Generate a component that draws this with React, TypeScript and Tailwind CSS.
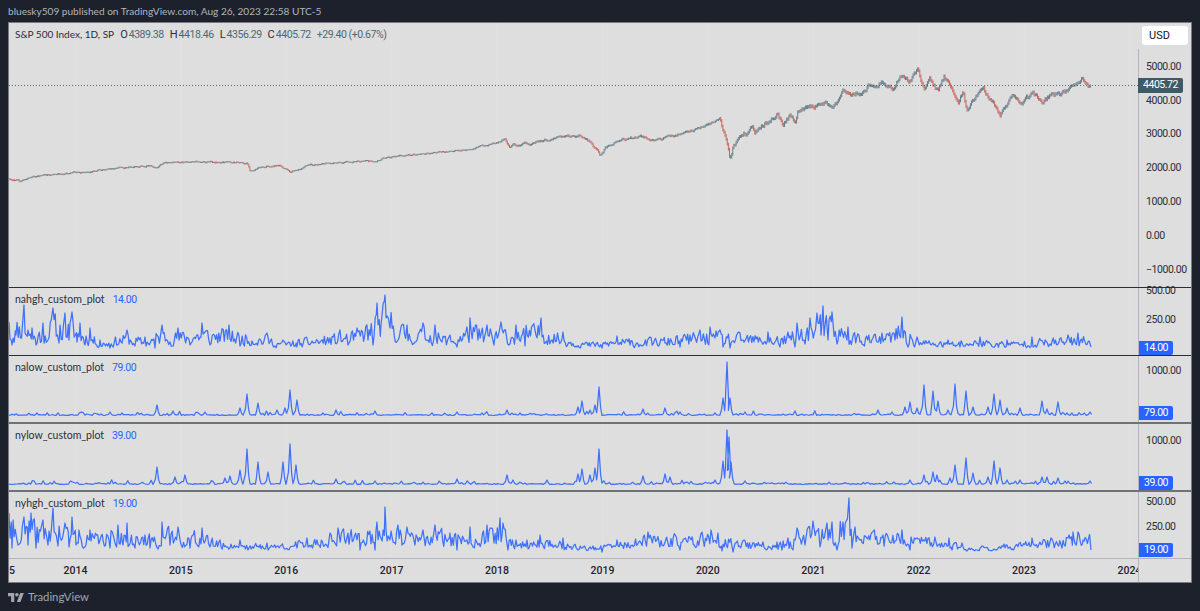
import React from "react";

type P = [number, number];

function rng(seed: number) {
  let s = seed;
  return () => {
    s = (s * 1664525 + 1013904223) >>> 0;
    return s / 4294967296;
  };
}

function lerp(k: P[], x: number) {
  if (x <= k[0][0]) return k[0][1];
  for (let i = 1; i < k.length; i++) {
    if (x <= k[i][0]) {
      const [a, b] = k[i - 1];
      const [c, d] = k[i];
      return b + ((d - b) * (x - a)) / (c - a || 1);
    }
  }
  return k[k.length - 1][1];
}

function dense(keys: P[], base: number, seed: number) {
  const r = rng(seed);
  const peaks = keys.filter((k, i) => {
    const a = keys[i - 1];
    const b = keys[i + 1];
    return (!a || k[1] <= a[1]) && (!b || k[1] <= b[1]);
  });
  const out: P[] = [];
  let n = 0.5;
  for (let i = 0; i < keys.length; i++) {
    out.push(keys[i]);
    if (i === keys.length - 1) break;
    const x0 = keys[i][0];
    const x1 = keys[i + 1][0];
    for (let x = x0 + 1.1; x < x1 - 0.6; x += 1.1) {
      const e = Math.max(base - lerp(peaks, x), 6);
      n = 0.3 * n + 0.7 * r();
      const f = 0.14 + 0.84 * Math.pow(n, 1.2);
      out.push([x, base - e * f]);
    }
  }
  return out;
}

function sparse(keys: P[], base: number, seed: number) {
  const r = rng(seed);
  const ripple = () => base - r() * 1 - Math.pow(r(), 10) * 4;
  const out: P[] = [];
  let x = 9;
  for (const [px, py] of keys) {
    while (x < px - 2.4) {
      out.push([x, ripple()]);
      x += 1.8;
    }
    out.push([px - 1.6, base - (base - py) * 0.3]);
    out.push([px, py]);
    out.push([px + 1.6, base - (base - py) * 0.28]);
    x = px + 3;
  }
  while (x < 1091) {
    out.push([x, ripple()]);
    x += 1.8;
  }
  return out;
}

const toD = (pts: P[]) => "M" + pts.map(([a, b]) => `${a.toFixed(1)} ${b.toFixed(1)}`).join("L");

const gridXs = [75.5, 180.9, 286.3, 391.7, 497.1, 602.5, 707.9, 813.3, 918.7, 1024.1, 1129.5];
const gridD = gridXs.map((x) => `M${x} 0V600`).join("");

const priceKeys: P[] = [
  [9, 179], [20, 181], [30, 177], [50, 175], [85, 172], [120, 168], [150, 165], [158, 168], [165, 163], [200, 162],
  [247, 163], [250, 171], [262, 167], [280, 165], [290, 172], [297, 170], [310, 165], [340, 163], [355, 161], [375, 162],
  [385, 158], [420, 154], [470, 150], [497, 143], [505, 138], [510, 146], [540, 141], [580, 135], [590, 142], [600, 155],
  [605, 148], [620, 140], [640, 137], [660, 140], [690, 131], [700, 128], [720, 120], [725, 137], [730, 160], [733, 148],
  [743, 137], [752, 127], [755, 132], [772, 119], [778, 113], [783, 125], [790, 115], [795, 123], [798, 112], [820, 105],
  [825, 102], [830, 107], [837, 102], [843, 93], [852, 95], [862, 92], [870, 85], [883, 80], [892, 88], [903, 75],
  [910, 80], [918, 72], [924, 90], [930, 80], [938, 92], [944, 77], [952, 87], [958, 103], [963, 93], [967, 110],
  [983, 88], [1000, 115], [1013, 98], [1022, 105], [1033, 93], [1043, 103], [1052, 94], [1065, 93], [1072, 85], [1083, 78],
  [1090, 87],
];

const p1: P[] = [
  [9, 322], [12, 345], [16, 335], [24, 305], [28, 330], [32, 328], [36, 345], [43, 323], [48, 340], [53, 308], [59, 343], [65, 313], [69, 340], [72, 312], [77, 342], [80, 323],
  [85, 345], [90, 328], [95, 343], [100, 340], [110, 348], [127, 330], [135, 346], [145, 337], [155, 348], [162, 325], [170, 342], [178, 328], [190, 345], [202, 323], [210, 345], [229, 325],
  [240, 346], [267, 333], [275, 346], [283, 340], [297, 347], [300, 345], [320, 342], [340, 330], [348, 345], [357, 328], [368, 340], [373, 345], [377, 303], [381, 325], [385, 295], [390, 328],
  [398, 340], [407, 325], [415, 342], [423, 323], [428, 340], [435, 325], [442, 342], [450, 335], [457, 347], [470, 318], [478, 340], [487, 325], [494, 345], [501, 322], [509, 345], [516, 325],
  [525, 346], [541, 318], [552, 340], [563, 332], [577, 347], [593, 342], [602, 348], [617, 336], [630, 345], [650, 337], [665, 343], [680, 347], [690, 335], [700, 330], [710, 327], [715, 338], [720, 330],
  [723, 347], [730, 348], [743, 340], [768, 332], [775, 342], [780, 347], [788, 332], [795, 347], [797, 323], [804, 340], [810, 318], [817, 313], [821, 335], [823, 306], [828, 340], [832, 312], [837, 344],
  [848, 327], [860, 342], [873, 338], [882, 333], [895, 340], [902, 317], [908, 347], [917, 337], [933, 343], [948, 340], [960, 347], [980, 337], [993, 347], [1007, 340], [1020, 345], [1032, 337], [1050, 344],
  [1068, 335], [1072, 345], [1078, 333], [1085, 342], [1091, 347],
];

const p2: P[] = [
  [37, 413], [110, 412], [122, 413], [157, 405], [173, 411], [205, 412], [240, 408], [247, 394], [258, 403], [277, 410], [285, 408], [290, 390], [297, 400], [323, 413], [336, 410], [375, 411],
  [457, 412], [482, 413], [507, 410], [520, 413], [578, 407], [582, 401], [590, 410], [595, 405], [599, 387], [643, 409], [665, 408], [680, 412], [715, 413], [723, 398], [727, 362], [730, 398],
  [745, 412], [783, 414], [878, 410], [892, 412], [905, 407], [910, 402], [917, 408], [924, 385], [933, 391], [938, 401], [948, 410], [955, 384], [966, 391], [973, 407], [988, 407], [994, 394],
  [1000, 400], [1007, 408], [1020, 408], [1042, 401], [1047, 409], [1058, 402], [1067, 413], [1090, 412],
];

const p3: P[] = [
  [157, 467], [175, 477], [185, 475], [225, 478], [230, 476], [240, 470], [247, 449], [258, 462], [268, 472], [283, 462], [290, 444], [296, 465], [336, 479], [375, 481], [457, 479], [507, 475], [513, 480],
  [547, 480], [578, 474], [582, 469], [590, 475], [595, 468], [599, 449], [643, 476], [665, 474], [670, 477], [715, 480], [723, 461], [727, 430], [729, 437], [731, 462], [745, 481], [910, 480],
  [924, 475], [933, 472], [937, 475], [950, 478], [955, 465], [966, 458], [973, 473], [988, 477], [994, 461], [1000, 468], [1007, 480], [1020, 480], [1042, 477], [1047, 477], [1058, 478], [1065, 481], [1090, 481],
];

const p4: P[] = [
  [9, 513], [12, 548], [18, 545], [24, 517], [28, 545], [31, 513], [36, 548], [43, 520], [48, 545], [53, 508], [58, 546], [65, 523], [69, 547], [72, 517], [76, 545], [79, 530], [85, 547], [90, 530], [100, 540],
  [110, 548], [118, 525], [123, 545], [127, 523], [135, 548], [145, 535], [150, 548], [158, 549], [162, 522], [170, 545], [178, 527], [190, 548], [202, 528], [210, 547], [220, 540], [240, 540], [248, 550], [267, 543],
  [297, 548], [307, 538], [317, 540], [330, 533], [338, 528], [357, 540], [360, 550], [375, 550], [377, 522], [381, 538], [385, 507], [390, 540], [398, 525], [402, 545], [407, 527], [415, 545], [423, 530], [430, 545], [435, 525],
  [450, 533], [457, 550], [470, 527], [478, 545], [487, 525], [494, 543], [500, 518], [503, 523], [508, 550], [516, 540], [527, 540], [540, 535], [563, 538], [578, 550], [593, 546], [602, 552],
  [617, 540], [630, 548], [648, 532], [660, 547], [680, 550], [690, 538], [711, 530], [718, 533], [722, 551], [733, 552], [763, 542], [777, 542], [782, 550], [788, 538], [793, 550], [797, 528], [805, 545],
  [813, 521], [820, 547], [827, 523], [832, 522], [837, 550], [843, 522], [849, 498], [852, 548], [855, 527], [860, 540], [883, 535], [902, 530], [910, 550], [917, 538], [935, 537], [949, 538], [952, 550],
  [962, 543], [967, 551], [982, 546], [993, 550], [1007, 545], [1032, 538], [1040, 542], [1068, 538], [1073, 532], [1078, 532], [1083, 540], [1091, 550],
];

const Price = () => {
  const r = rng(7);
  let up = "";
  let down = "";
  let prev = lerp(priceKeys, 9);
  let n = 0;
  for (let x = 9; x <= 1091; x += 1.1) {
    const amp = x < 500 ? 1.5 : x < 720 ? 2.2 : 3.8;
    n = 0.72 * n + (r() - 0.5) * amp;
    const y = lerp(priceKeys, x) + n;
    const wick = amp * 0.36;
    const body = `M${x.toFixed(1)} ${(Math.min(y, prev) - wick).toFixed(1)}V${(Math.max(y, prev) + wick).toFixed(1)}`;
    if (y > prev + amp * 0.26) down += body;
    else up += body;
    prev = y;
  }
  return (
    <svg className="block h-full w-full" viewBox="9 23 1129 264" preserveAspectRatio="none">
      <path d={gridD} stroke="#e1e1e1" strokeWidth="1" fill="none" />
      <line x1="9" x2="1138" y1="85.5" y2="85.5" stroke="#4f6d76" strokeWidth="1" strokeDasharray="1 2" />
      <path d={up} fill="none" stroke="#45616d" strokeWidth="0.75" />
      <path d={down} fill="none" stroke="#c4453c" strokeWidth="0.8" />
    </svg>
  );
};

const Wave = ({ d, box }: { d: string; box: string }) => (
  <svg className="block h-full w-full" viewBox={box} preserveAspectRatio="none">
    <path d={gridD} stroke="#e1e1e1" strokeWidth="1" fill="none" />
    <path d={d} fill="none" stroke="#2962ff" strokeWidth="1.25" strokeLinejoin="round" opacity="0.88" />
  </svg>
);

const Num = ({ children, cls }: { children: React.ReactNode; cls?: string }) => (
  <span className={`font-['Roboto',sans-serif] text-[10.5px] tracking-[-0.45px] ${cls ?? ""}`}>{children}</span>
);

const Legend = ({ name, value }: { name: string; value: string }) => (
  <div className="absolute left-[6px] top-[6px] flex h-[13px] items-baseline gap-[8px] whitespace-nowrap text-[10.5px] leading-none text-[#2a2e39]">
    <span>{name}</span>
    <Num cls="text-[#2962ff]">{value}</Num>
  </div>
);

const Badge = ({ v, cls }: { v: string; cls: string }) => (
  <div className={`absolute left-0 flex h-[14px] w-[34px] items-center justify-center rounded-r-[2px] bg-[#2962ff] leading-none text-white ${cls}`}>
    <Num>{v}</Num>
  </div>
);

const Tick = ({ v, h }: { v?: string; h: string }) => (
  <div className={`flex items-center whitespace-nowrap pl-[7px] pt-[2px] leading-none text-[#2a2e39] ${h}`}>
    <Num>{v}</Num>
  </div>
);

const M = ({ l, v }: { l: string; v: string }) => (
  <span className="flex items-baseline">
    <Num cls="mr-[1px] text-[11px] tracking-normal">{l}</Num>
    <Num cls="text-[#4a6a74]">{v}</Num>
  </span>
);

const years = ["2014", "2015", "2016", "2017", "2018", "2019", "2020", "2021", "2022", "2023", "2024"];

export default function App() {
  const w1 = toD(dense(p1, 350, 11));
  const w2 = toD(sparse(p2, 415.5, 23));
  const w3 = toD(sparse(p3, 484.5, 37));
  const w4 = toD(dense(p4, 552, 41));
  return (
    <div className="flex h-[611px] w-[1200px] flex-col overflow-hidden bg-[#1c212c] font-['Lato',sans-serif]">
      <div className="flex h-[22px] shrink-0 items-center pl-[8px] text-[10.1px] leading-none text-[#b2b5be]">
        bluesky509 published on TradingView.com, Aug 26, 2023 22:58 UTC-5
      </div>
      <div className="ml-[8px] flex w-[1184px] shrink-0 flex-col border border-[#787b86] bg-[#dedede]">
        <div className="flex h-[265px] border-b border-[#2a2e39]">
          <div className="relative min-w-0 flex-1">
            <Price />
            <div className="absolute left-[6px] top-[6px] flex h-[13px] items-baseline gap-[6px] whitespace-nowrap text-[10px] leading-none text-[#2a2e39]">
              <span>S&amp;P 500 Index, 1D, SP</span>
              <M l="O" v="4389.38" />
              <M l="H" v="4418.46" />
              <M l="L" v="4356.29" />
              <M l="C" v="4405.72" />
              <Num cls="text-[#4a6a74]">+29.40 (+0.67%)</Num>
            </div>
          </div>
          <div className="relative w-[53px] shrink-0">
            <div className="mt-[26px] flex h-[238px] flex-col border-l border-[#b2b5be]">
              <Tick v="5000.00" h="h-[33.9px]" />
              <Tick v="4000.00" h="h-[33.9px]" />
              <Tick v="3000.00" h="h-[33.9px]" />
              <Tick v="2000.00" h="h-[33.9px]" />
              <Tick v="1000.00" h="h-[33.9px]" />
              <Tick v="0.00" h="h-[33.9px]" />
              <Tick v="−1000.00" h="h-[33.9px]" />
            </div>
            <div className="absolute right-[3px] top-[3px] flex h-[19px] w-[46px] items-center rounded-[3px] bg-white pl-[7px] font-['Roboto',sans-serif] text-[11px] leading-none text-[#131722]">
              USD
            </div>
            <div className="absolute left-0 top-[55px] flex h-[15px] w-[45px] items-center justify-center rounded-r-[2px] bg-[#3d5a66] leading-none text-white">
              <Num>4405.72</Num>
            </div>
          </div>
        </div>

        <div className="flex h-[68px] border-b border-[#2a2e39]">
          <div className="relative min-w-0 flex-1">
            <Wave d={w1} box="9 288 1129 67" />
            <Legend name="nahgh_custom_plot" value="14.00" />
          </div>
          <div className="relative flex w-[53px] shrink-0 flex-col border-l border-[#b2b5be]">
            <Tick v="500.00" h="-mt-[12px] h-[29px]" />
            <Tick v="250.00" h="h-[29px]" />
            <Badge v="14.00" cls="top-[53px]" />
          </div>
        </div>

        <div className="flex h-[68px] border-b-2 border-b-[#6f7278]">
          <div className="relative min-w-0 flex-1">
            <Wave d={w2} box="9 356 1129 66" />
            <Legend name="nalow_custom_plot" value="79.00" />
          </div>
          <div className="relative flex w-[53px] shrink-0 flex-col border-l border-[#b2b5be]">
            <Tick v="1000.00" h="h-[28px]" />
            <Badge v="79.00" cls="top-[50px]" />
          </div>
        </div>

        <div className="flex h-[68px] border-b-2 border-b-[#6f7278]">
          <div className="relative min-w-0 flex-1">
            <Wave d={w3} box="9 424 1129 66" />
            <Legend name="nylow_custom_plot" value="39.00" />
          </div>
          <div className="relative flex w-[53px] shrink-0 flex-col border-l border-[#b2b5be]">
            <Tick v="1000.00" h="h-[32px]" />
            <Badge v="39.00" cls="top-[52px]" />
          </div>
        </div>

        <div className="flex h-[67px] border-b border-[#b2b5be]">
          <div className="relative min-w-0 flex-1">
            <Wave d={w4} box="9 492 1129 66" />
            <Legend name="nyhgh_custom_plot" value="19.00" />
          </div>
          <div className="relative flex w-[53px] shrink-0 flex-col border-l border-[#b2b5be]">
            <Tick v="500.00" h="h-[18px]" />
            <Tick v="250.00" h="h-[32px]" />
            <Badge v="19.00" cls="top-[51px]" />
          </div>
        </div>

        <div className="flex h-[23px]">
          <div className="flex min-w-0 flex-1 items-center overflow-hidden pt-[2px] font-['Roboto',sans-serif] text-[10.5px] font-medium leading-none text-[#1f2430]">
            <span className="w-[13.8px] shrink-0">5</span>
            {years.map((y) => (
              <span key={y} className="w-[105.4px] shrink-0 text-center">
                {y}
              </span>
            ))}
          </div>
          <div className="w-[53px] shrink-0 border-l border-[#b2b5be]" />
        </div>
      </div>
      <div className="flex flex-1 items-center gap-[4px] pl-[8px] text-[#a3a6af]">
        <svg width="16" height="9" viewBox="0 4 36 20" fill="currentColor">
          <path d="M14 24H7V11H0V4h14v20zM28 24h-8l7.5-20h8L28 24z" />
          <circle cx="20" cy="8" r="4" />
        </svg>
        <span className="text-[11.3px] leading-none">TradingView</span>
      </div>
    </div>
  );
}
